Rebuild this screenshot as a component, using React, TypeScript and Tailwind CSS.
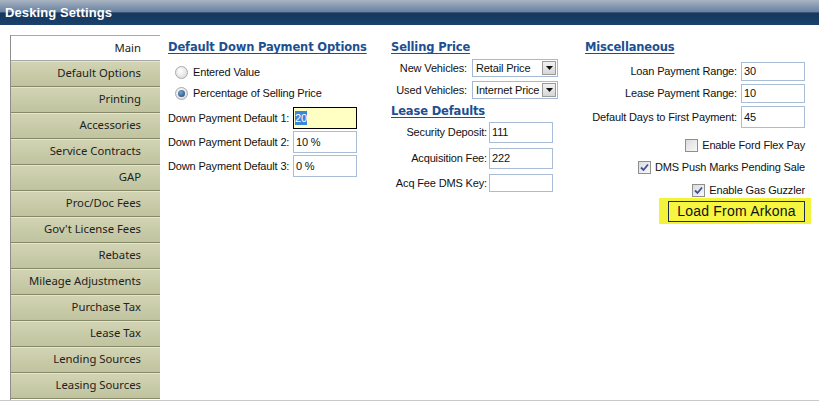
import React from "react";

const tabs = [
  "Main",
  "Default Options",
  "Printing",
  "Accessories",
  "Service Contracts",
  "GAP",
  "Proc/Doc Fees",
  "Gov't License Fees",
  "Rebates",
  "Mileage Adjustments",
  "Purchase Tax",
  "Lease Tax",
  "Lending Sources",
  "Leasing Sources",
];

const Heading = ({ children }: { children: React.ReactNode }) => (
  <div className="h-[14px] leading-[14px] text-[11.5px] font-bold text-[#1d4f91] underline underline-offset-[2px] whitespace-nowrap font-['DejaVu_Sans',sans-serif]">
    {children}
  </div>
);

const Radio = ({ checked }: { checked?: boolean }) => (
  <span className="w-[13px] h-[13px] rounded-full border border-[#a9a9a9] bg-[radial-gradient(circle_at_40%_35%,#ffffff,#d4d4d4)] flex items-center justify-center">
    {checked && (
      <span className="w-[7px] h-[7px] rounded-full bg-[radial-gradient(circle_at_40%_35%,#6ea6d8,#1c3f6e)]" />
    )}
  </span>
);

const Check = ({ checked }: { checked?: boolean }) => (
  <span className="w-[13px] h-[13px] border border-[#8f8f8f] bg-[linear-gradient(135deg,#dcdcdc,#f8f8f8)] flex items-center justify-center">
    {checked && (
      <svg width="9" height="9" viewBox="0 0 9 9">
        <path d="M1 4.5 L3.5 7 L8 1.5" fill="none" stroke="#3b4fa0" strokeWidth="1.8" />
      </svg>
    )}
  </span>
);

const Select = ({ value }: { value: string }) => (
  <div className="w-[86px] h-[18px] border border-[#a5b9d3] bg-white flex items-center justify-between pl-[3px] pr-[1px]">
    <span className="whitespace-nowrap">{value}</span>
    <span className="w-[14px] h-[14px] shrink-0 border border-[#9a9a9a] bg-[linear-gradient(#f2f2f2,#d6d6d6)] flex items-center justify-center">
      <svg width="7" height="4" viewBox="0 0 7 4">
        <path d="M0 0 H7 L3.5 4 Z" fill="#111" />
      </svg>
    </span>
  </div>
);

const Field = ({ value, h = "h-[21px]" }: { value: string; h?: string }) => (
  <div className={`w-[64px] ${h} shrink-0 border border-[#a9bdd6] bg-white flex items-center pl-[2px]`}>
    {value}
  </div>
);

export default function App() {
  return (
    <div className="w-[819px] h-[403px] overflow-hidden bg-white font-['Liberation_Sans',Arial,sans-serif] text-[#111]">
      <div className="h-[25px] bg-[linear-gradient(to_bottom,#a9b4c2_0%,#8598b0_25%,#6a84a3_46%,#577292_48%,#17375b_52%,#1a416d_100%)] flex items-center pl-[5px]">
        <span className="text-white font-bold text-[13px] tracking-[0.1px]">
          Desking Settings
        </span>
      </div>

      <div className="flex pt-[10px] pl-[10px] h-[376px] border-b border-[#c9c9c9]">
        <div className="w-[150px] shrink-0 flex flex-col border-l border-[#8d8d8d]">
          {tabs.map((t, i) => (
            <div
              key={t}
              className={
                i === 0
                  ? "h-[26px] shrink-0 bg-white border-t border-b border-[#a8a8a8] flex items-center justify-end pr-[19px] text-[11.3px] whitespace-nowrap font-['Noto_Sans',sans-serif] text-[#222]"
                  : "h-[26px] shrink-0 bg-[linear-gradient(#d2d4b4,#c0c39e)] border-b border-[#868a69] shadow-[inset_0_1px_0_#e3e5cc] flex items-center justify-end pr-[19px] text-[11.3px] whitespace-nowrap font-['Noto_Sans',sans-serif] text-[#222]"
              }
            >
              {t}
            </div>
          ))}
        </div>

        <div className="flex pt-[5px] pl-[8px] text-[11px] tracking-[-0.15px] whitespace-nowrap">
          {/* column 1 */}
          <div className="w-[223px] shrink-0 flex flex-col">
            <Heading>Default Down Payment Options</Heading>
            <div className="mt-[10px] h-[16px] flex items-center pl-[7px] gap-[5px]">
              <Radio />
              <span>Entered Value</span>
            </div>
            <div className="mt-[5px] h-[16px] flex items-center pl-[7px] gap-[5px]">
              <Radio checked />
              <span>Percentage of Selling Price</span>
            </div>
            <div className="mt-[6px] flex flex-col gap-[2px]">
              <div className="flex items-center">
                <span className="w-[125px]">Down Payment Default 1:</span>
                <div className="w-[64px] h-[22px] border border-black bg-[#ffffc4] flex items-center pl-[1px]">
                  <span className="bg-[#3a86d8] text-white leading-[14px]">20</span>
                </div>
              </div>
              <div className="flex items-center">
                <span className="w-[125px]">Down Payment Default 2:</span>
                <Field value="10 %" h="h-[22px]" />
              </div>
              <div className="flex items-center">
                <span className="w-[125px]">Down Payment Default 3:</span>
                <Field value="0 %" h="h-[22px]" />
              </div>
            </div>
          </div>

          {/* column 2 */}
          <div className="w-[194px] shrink-0 flex flex-col">
            <Heading>Selling Price</Heading>
            <div className="mt-[5px] flex flex-col gap-[4px]">
              <div className="flex items-center gap-[5px]">
                <span className="w-[76px] text-right">New Vehicles:</span>
                <Select value="Retail Price" />
              </div>
              <div className="flex items-center gap-[5px]">
                <span className="w-[76px] text-right">Used Vehicles:</span>
                <Select value="Internet Price" />
              </div>
            </div>
            <div className="mt-[5px]">
              <Heading>Lease Defaults</Heading>
            </div>
            <div className="mt-[4px] flex flex-col gap-[5px]">
              <div className="flex items-center gap-[2px]">
                <span className="w-[96px] text-right">Security Deposit:</span>
                <Field value="111" />
              </div>
              <div className="flex items-center gap-[2px]">
                <span className="w-[96px] text-right">Acquisition Fee:</span>
                <Field value="222" />
              </div>
              <div className="flex items-center gap-[2px]">
                <span className="w-[96px] text-right">Acq Fee DMS Key:</span>
                <Field value="" h="h-[18px]" />
              </div>
            </div>
          </div>

          {/* column 3 */}
          <div className="w-[220px] shrink-0 flex flex-col">
            <Heading>Miscellaneous</Heading>
            <div className="mt-[8px] flex flex-col gap-[3px] items-end">
              <div className="flex items-center gap-[4px]">
                <span>Loan Payment Range:</span>
                <Field value="30" h="h-[19px]" />
              </div>
              <div className="flex items-center gap-[4px]">
                <span>Lease Payment Range:</span>
                <Field value="10" h="h-[19px]" />
              </div>
              <div className="flex items-center gap-[4px]">
                <span>Default Days to First Payment:</span>
                <Field value="45" h="h-[22px]" />
              </div>
            </div>
            <div className="mt-[6px] flex flex-col items-end">
              <div className="h-[22px] flex items-center gap-[4px]">
                <Check />
                <span>Enable Ford Flex Pay</span>
              </div>
              <div className="h-[23px] flex items-center gap-[4px]">
                <Check checked />
                <span>DMS Push Marks Pending Sale</span>
              </div>
              <div className="h-[22px] flex items-center gap-[4px]">
                <Check checked />
                <span>Enable Gas Guzzler</span>
              </div>
              <div className="mt-[-3px] mr-[-6px] bg-[#f3f33c] pl-[9px] pr-[6px] pt-[3px] pb-[2px]">
                <div className="w-[137px] h-[21px] border border-[#1e2b4a] bg-[#f6f640] flex items-center justify-center text-[14px] tracking-[0.2px] text-[#111]">
                  Load From Arkona
                </div>
              </div>
            </div>
          </div>
        </div>
      </div>
    </div>
  );
}
